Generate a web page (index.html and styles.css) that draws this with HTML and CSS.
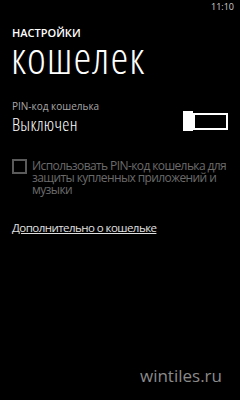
FILE: index.html
```html
<!DOCTYPE html>
<html lang="ru">
<head>
<meta charset="utf-8">
<title>кошелек</title>
<link rel="stylesheet" href="styles.css">
</head>
<body>
<div class="screen">
  <div class="status"><span class="time">11:10</span></div>
  <div class="content">
    <div class="app-title">НАСТРОЙКИ</div>
    <div class="page-title">кошелек</div>

    <div class="setting">
      <div class="setting-label">PIN-код кошелька</div>
      <div class="setting-row">
        <div class="setting-value">Выключен</div>
        <div class="toggle">
          <div class="toggle-thumb"></div>
          <div class="toggle-track"></div>
        </div>
      </div>
    </div>

    <div class="check-row">
      <div class="checkbox"></div>
      <div class="check-text">Использовать PIN-код кошелька для защиты купленных приложений и музыки</div>
    </div>

    <a class="link" href="#">Дополнительно о кошельке</a>
  </div>
  <div class="watermark">wintiles.ru</div>
</div>
</body>
</html>
```
FILE: styles.css
```css
html, body {
  margin: 0;
  padding: 0;
  background: #000;
}
body {
  font-family: "Open Sans", "Noto Sans", sans-serif;
  color: #fff;
}
.screen {
  position: relative;
  width: 240px;
  height: 400px;
  overflow: hidden;
  background: #000;
}
.status {
  height: 14px;
  display: flex;
  justify-content: flex-end;
  align-items: center;
  padding-right: 6px;
}
.time {
  font-size: 9px;
  line-height: 14px;
  color: #d0d0d0;
}
.content {
  padding: 12px 12px 0 12px;
}
.app-title {
  font-size: 11px;
  line-height: 13px;
  font-weight: 600;
}
.page-title {
  font-size: 45px;
  line-height: 36px;
  font-weight: 300;
  font-stretch: 75%;
  letter-spacing: 1px;
  margin-left: -1px;
}
.setting {
  margin-top: 25px;
}
.setting-label {
  font-size: 10px;
  line-height: 13px;
  color: #a8a8a8;
}
.setting-row {
  display: flex;
  justify-content: space-between;
  align-items: flex-start;
}
.setting-value {
  font-size: 18px;
  line-height: 22px;
  font-weight: 300;
  font-stretch: 75%;
  letter-spacing: 0.3px;
  color: #fff;
}
.toggle {
  display: flex;
  align-items: center;
  margin-top: -2px;
}
.toggle-thumb {
  width: 10px;
  height: 20px;
  background: #fff;
}
.toggle-track {
  width: 35px;
  height: 17px;
  box-sizing: border-box;
  border: 2px solid #fff;
}
.check-row {
  display: flex;
  align-items: flex-start;
  gap: 5px;
  margin-top: 24px;
}
.checkbox {
  flex: none;
  width: 15px;
  height: 15px;
  box-sizing: border-box;
  border: 2px solid #5a5a5a;
}
.check-text {
  font-size: 12px;
  line-height: 12px;
  letter-spacing: -0.6px;
  color: #6b6b6b;
  padding-top: 1px;
}
.link {
  display: inline-block;
  margin-top: 24px;
  font-size: 11.5px;
  line-height: 15px;
  letter-spacing: -0.55px;
  color: #e0e0e0;
  text-decoration: underline;
}
.watermark {
  position: absolute;
  right: 18px;
  top: 365px;
  font-size: 17px;
  line-height: 22px;
  color: #8a8a8a;
}
```
